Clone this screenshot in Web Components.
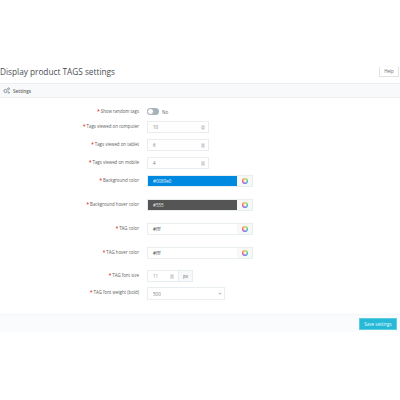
<!DOCTYPE html>
<html>
<head>
<meta charset="utf-8">
<style>
  html, body { margin: 0; padding: 0; background: #fff; }
  body { font-family: "Open Sans", sans-serif; color: #555; width: 400px; height: 400px; overflow: hidden; }
</style>
</head>
<body>
<page-head title="Display product TAGS settings"></page-head>
<settings-panel heading="Settings">
  <form-row label="Show random tags" gap="5" height="9" line="9"><toggle-field></toggle-field></form-row>
  <form-row label="Tags viewed on computer" gap="6"><number-field value="10"></number-field></form-row>
  <form-row label="Tags viewed on tablet" gap="6"><number-field value="6"></number-field></form-row>
  <form-row label="Tags viewed on mobile" gap="6"><number-field value="4"></number-field></form-row>
  <form-row label="Background color" gap="12"><color-field value="#0089e0" bg="#0089e0" fg="#e6f4fd"></color-field></form-row>
  <form-row label="Background hover color" gap="12"><color-field value="#555" bg="#555" fg="#e8e8e8"></color-field></form-row>
  <form-row label="TAG color" gap="12"><color-field value="#fff" bg="#fff" fg="#444"></color-field></form-row>
  <form-row label="TAG hover color" gap="11"><color-field value="#fff" bg="#fff" fg="#444"></color-field></form-row>
  <form-row label="TAG font size" gap="5"><size-field value="11" unit="px"></size-field></form-row>
  <form-row label="TAG font weight (bold)" gap="0" height="13"><select-field value="500"></select-field></form-row>
</settings-panel>
<panel-footer>Save settings</panel-footer>

<script>
// small helper so every element gets an open shadow root from a string
function shadow(el, html) {
  el.attachShadow({ mode: 'open' }).innerHTML = html;
}

class PageHead extends HTMLElement {
  connectedCallback() {
    shadow(this, `
    <style>
      :host { display: flex; justify-content: space-between; align-items: flex-end; height: 77px; padding: 0 1px 0 0; box-sizing: border-box; }
      h1 { margin: 0; font: 400 8.25px/11px "Open Sans", sans-serif; color: #4a4e54; }
      .help { width: 20px; height: 10px; box-sizing: border-box; border: 1px solid #dfe3e6; border-top: 0; background: #fff; font-size: 4.5px; line-height: 9px; text-align: center; color: #5f6c73; }
    </style>
    <h1>${this.getAttribute('title')}</h1>
    <div class="help">Help</div>`);
  }
}

class SettingsPanel extends HTMLElement {
  connectedCallback() {
    shadow(this, `
    <style>
      :host { display: block; margin-top: 6px; }
      header { height: 15px; box-sizing: border-box; background: #f8f9fb; border-top: 1px solid #e9eef1; border-bottom: 1px solid #eef1f3; display: flex; align-items: center; gap: 3px; padding-left: 3px; font-size: 4.7px; font-weight: 600; color: #666; }
      svg { width: 7px; height: 7px; display: block; }
      .body { padding-top: 9px; }
    </style>
    <header>
      <svg viewBox="0 0 14 14" fill="none" stroke="#7c8a92" stroke-width="1.8">
        <circle cx="5" cy="8" r="3.2"/><circle cx="11" cy="3.5" r="1.8"/><circle cx="11.5" cy="11" r="1.4"/>
      </svg>
      ${this.getAttribute('heading')}
    </header>
    <div class="body"><slot></slot></div>`);
  }
}

class FormRow extends HTMLElement {
  connectedCallback() {
    const gap = this.getAttribute('gap') || 0;
    const h = this.getAttribute('height') || 12;
    const line = this.getAttribute('line') || 11;
    shadow(this, `
    <style>
      :host { display: flex; align-items: flex-start; height: ${h}px; margin-bottom: ${gap}px; }
      label { width: 139px; flex: none; text-align: right; font-size: 4.4px; line-height: ${line}px; color: #5c5c5c; white-space: nowrap; }
      b { color: #e3433b; font-weight: 700; }
      .ctl { margin-left: 8px; }
    </style>
    <label><b>*</b> ${this.getAttribute('label')}</label>
    <div class="ctl"><slot></slot></div>`);
  }
}

class ToggleField extends HTMLElement {
  connectedCallback() {
    shadow(this, `
    <style>
      :host { display: flex; align-items: center; gap: 3px; height: 9px; font-size: 4.5px; color: #666; }
      .track { width: 12px; height: 7px; border-radius: 4px; background: #a6b2b9; position: relative; }
      .knob { position: absolute; left: 0; top: 0; width: 7px; height: 7px; border-radius: 50%; background: #fff; box-sizing: border-box; border: 1px solid #a6b2b9; }
    </style>
    <div class="track"><div class="knob"></div></div>No`);
  }
}

const arrows = `<svg viewBox="0 0 6 7" width="4" height="5" style="display:block"><rect width="6" height="7" fill="#e4e4e8"/><path d="M1.5 3 3 1.3 4.5 3M1.5 4 3 5.7 4.5 4" fill="none" stroke="#a0a0a6" stroke-width=".7"/></svg>`;

class NumberField extends HTMLElement {
  connectedCallback() {
    shadow(this, `
    <style>
      :host { display: flex; align-items: center; justify-content: space-between; width: 62px; height: 12px; box-sizing: border-box; border: 1px solid #e8eef0; background: #fff; padding: 0 3px 0 5px; font-size: 4.5px; color: #777; }
    </style>
    <span>${this.getAttribute('value')}</span>${arrows}`);
  }
}

class ColorField extends HTMLElement {
  connectedCallback() {
    const bg = this.getAttribute('bg'), fg = this.getAttribute('fg');
    shadow(this, `
    <style>
      :host { display: flex; width: 106px; height: 12px; box-sizing: border-box; border: 1px solid #e8eef0; background: #f6f8f9; }
      .val { width: 89px; background: ${bg}; color: ${fg}; font-size: 4.5px; line-height: 10px; padding-left: 5px; box-sizing: border-box; }
      .pick { flex: 1; display: flex; align-items: center; justify-content: center; }
      .wheel { width: 6px; height: 6px; border-radius: 50%; background: radial-gradient(circle, #f3f3f3 0 18%, transparent 55%), conic-gradient(#f4d53f, #8fd14f, #3fc4c9, #4f8ff0, #a45ad8, #ef4f7d, #f58a3c, #f4d53f); }
    </style>
    <div class="val">${this.getAttribute('value')}</div>
    <div class="pick"><div class="wheel"></div></div>`);
  }
}

class SizeField extends HTMLElement {
  connectedCallback() {
    shadow(this, `
    <style>
      :host { display: flex; width: 46px; height: 12px; box-sizing: border-box; border: 1px solid #e8eef0; background: #fff; font-size: 4.5px; color: #999; }
      .num { width: 31px; display: flex; align-items: center; justify-content: space-between; padding: 0 4px 0 5px; box-sizing: border-box; border-right: 1px solid #e8eef0; }
      .unit { flex: 1; background: #f6f8f9; text-align: center; line-height: 10px; color: #666; }
    </style>
    <div class="num"><span>${this.getAttribute('value')}</span>${arrows}</div>
    <div class="unit">${this.getAttribute('unit')}</div>`);
  }
}

class SelectField extends HTMLElement {
  connectedCallback() {
    shadow(this, `
    <style>
      :host { display: flex; align-items: center; justify-content: space-between; width: 78px; height: 13px; box-sizing: border-box; border: 1px solid #e8eef0; background: #fff; padding: 0 2px 0 5px; font-size: 4.5px; color: #777; }
      svg { width: 4px; height: 3px; }
    </style>
    <span>${this.getAttribute('value')}</span>
    <svg viewBox="0 0 8 6"><path d="M1 1.5 4 4.5 7 1.5" fill="none" stroke="#777" stroke-width="1.2"/></svg>`);
  }
}

class PanelFooter extends HTMLElement {
  connectedCallback() {
    shadow(this, `
    <style>
      :host { display: flex; justify-content: flex-end; align-items: center; height: 18px; margin-top: 14px; padding-right: 3px; background: #fafbfc; border-top: 1px solid #f5f6f7; box-sizing: border-box; }
      button { all: unset; width: 38px; height: 12px; box-sizing: border-box; background: #25b9d7; border: 1px solid #5fcde2; color: #e8fbff; font: 400 4.5px/10px "Open Sans", sans-serif; text-align: center; }
    </style>
    <button><slot></slot></button>`);
  }
}

customElements.define('page-head', PageHead);
customElements.define('settings-panel', SettingsPanel);
customElements.define('form-row', FormRow);
customElements.define('toggle-field', ToggleField);
customElements.define('number-field', NumberField);
customElements.define('color-field', ColorField);
customElements.define('size-field', SizeField);
customElements.define('select-field', SelectField);
customElements.define('panel-footer', PanelFooter);
</script>
</body>
</html>
